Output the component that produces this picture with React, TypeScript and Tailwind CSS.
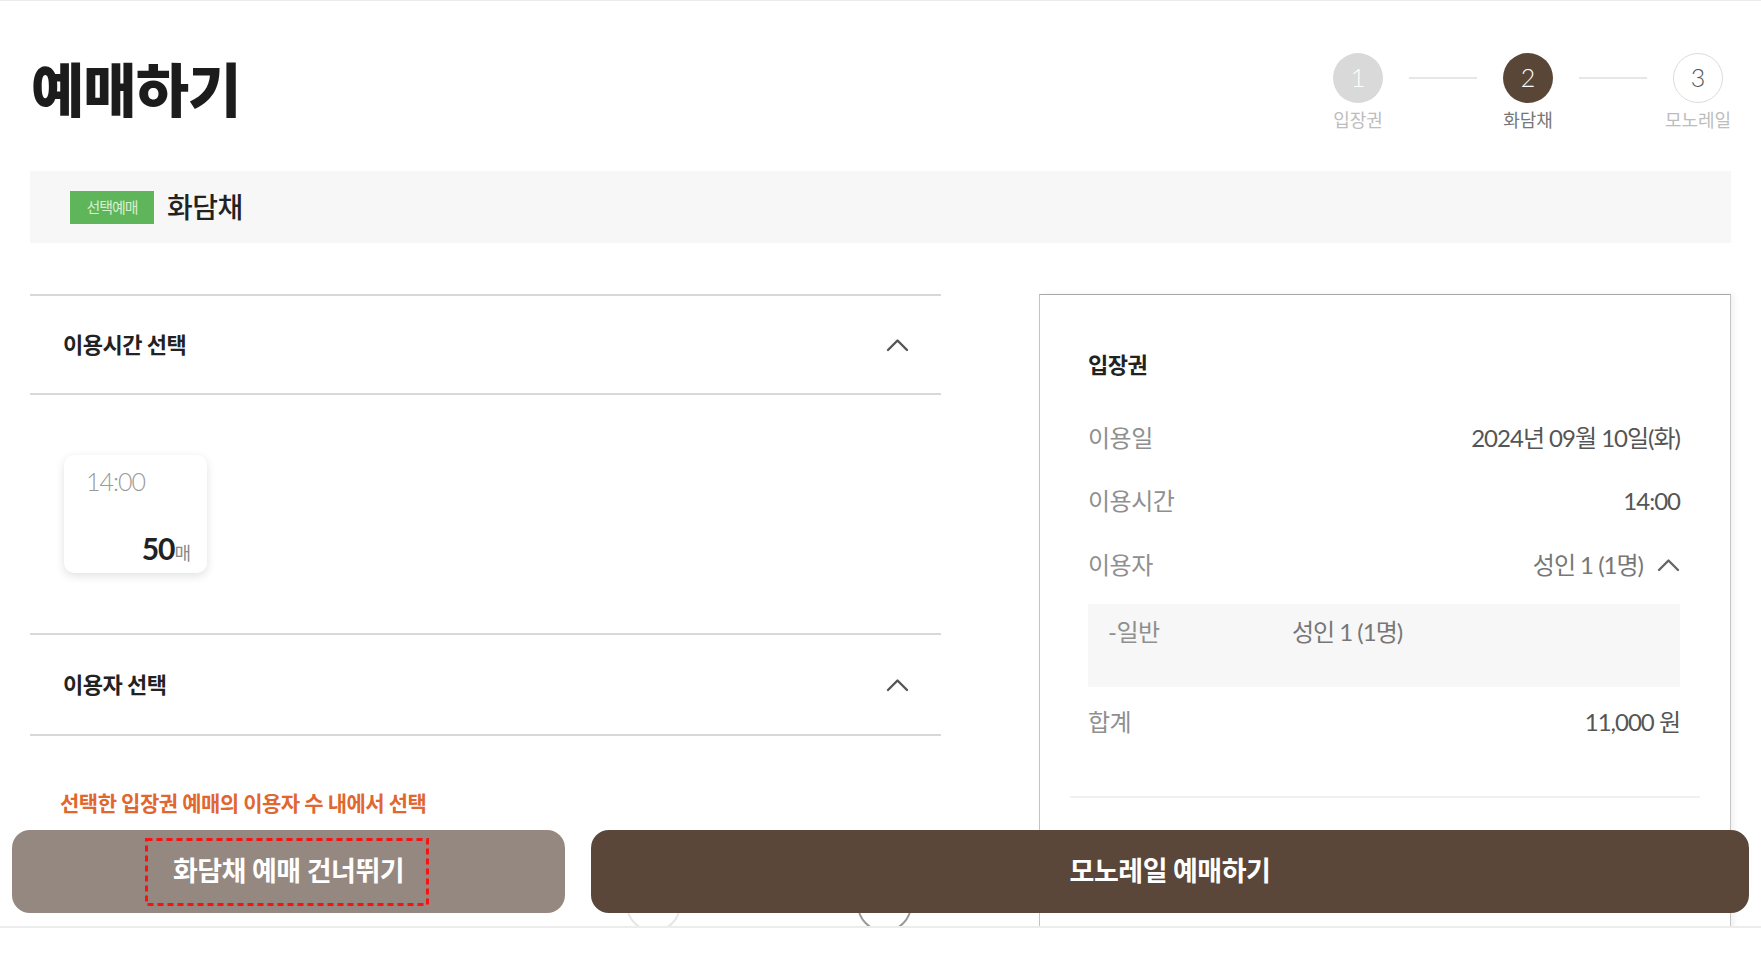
import React from 'react';

const font = { fontFamily: '"Lato", "Noto Sans CJK KR", sans-serif' };

function ChevronUp({ color = '#555' }: { color?: string }) {
  return (
    <svg width="23" height="14" viewBox="0 0 23 14" fill="none">
      <polyline points="2,12 11.5,2.5 21,12" stroke={color} strokeWidth="2.4" strokeLinecap="round" strokeLinejoin="round" />
    </svg>
  );
}

function Step({ n, label, state }: { n: number; label: string; state: 'done' | 'active' | 'todo' }) {
  const circle =
    state === 'done'
      ? 'bg-[#d9d9d9] text-white'
      : state === 'active'
        ? 'bg-[#5a4637] text-white'
        : 'bg-white text-[#555] border border-[#dcdcdc]';
  const text = state === 'active' ? 'text-[#777]' : 'text-[#bdbdbd]';
  return (
    <div className="flex w-[50px] flex-col items-center">
      <div className={`flex h-[50px] w-[50px] items-center justify-center rounded-full text-[25px] font-light ${circle}`}>{n}</div>
      <div className={`mt-[6px] whitespace-nowrap text-[18px] leading-[22px] ${text}`}>{label}</div>
    </div>
  );
}

function SectionHeader({ title, h }: { title: string; h: string }) {
  return (
    <div className={`flex items-center justify-between border-t-2 border-b-2 border-[#d8d8d8] pl-[33px] pr-[32px] ${h}`}>
      <span className="text-[22px] font-bold tracking-[-0.5px] text-[#222]">{title}</span>
      <ChevronUp />
    </div>
  );
}

function Row({ label, children, className = '' }: { label: string; children: React.ReactNode; className?: string }) {
  return (
    <div className={`flex h-[32px] items-center justify-between text-[24px] ${className}`}>
      <span className="text-[#8f8f8f] tracking-[-0.5px]">{label}</span>
      <span className="flex items-center text-[#555] tracking-[-1px]">{children}</span>
    </div>
  );
}

export default function App() {
  return (
    <div className="relative h-[963px] w-[1761px] overflow-hidden bg-white" style={font}>
      <div className="relative h-[928px] overflow-hidden border-t border-b-2 border-[#ececec]">
        {/* header */}
        <div className="flex h-[170px] items-start justify-between pl-[31px] pr-[38px] pt-[52px]">
          <h1 className="mt-[8px] text-[58px] font-black leading-none tracking-[-1px] text-[#1c1c1c]">예매하기</h1>
          <div className="flex items-start">
            <Step n={1} label="입장권" state="done" />
            <div className="mx-[26px] mt-[24px] h-[2px] w-[68px] bg-[#e6e6e6]" />
            <Step n={2} label="화담채" state="active" />
            <div className="mx-[26px] mt-[24px] h-[2px] w-[68px] bg-[#e6e6e6]" />
            <Step n={3} label="모노레일" state="todo" />
          </div>
        </div>

        {/* selected bar */}
        <div className="mx-[30px] flex h-[72px] items-center bg-[#f7f7f7] px-[40px]">
          <span className="flex h-[33px] w-[84px] items-center justify-center bg-[#5fb65a] text-[15px] text-[#d6efcf] tracking-[-1px]">선택예매</span>
          <span className="ml-[13px] text-[28px] font-medium tracking-[-0.5px] text-[#222]">화담채</span>
        </div>

        {/* columns */}
        <div className="mx-[30px] mt-[51px] flex justify-between">
          <div className="w-[911px]">
            <SectionHeader title="이용시간 선택" h="h-[101px]" />
            <div className="pl-[34px] pt-[60px] pb-[60px]">
              <div className="flex h-[118px] w-[143px] flex-col justify-between rounded-[10px] bg-white pl-[22px] pr-[16px] pt-[8px] pb-[10px] shadow-[0_3px_10px_rgba(0,0,0,0.12)]">
                <span className="text-[25px] font-light text-[#9a9a9a] tracking-[-1px]">14:00</span>
                <span className="self-end leading-none">
                  <span className="text-[30px] font-bold text-[#222] tracking-[-1px]">50</span>
                  <span className="text-[18px] text-[#888]">매</span>
                </span>
              </div>
            </div>
            <SectionHeader title="이용자 선택" h="h-[103px] border-t-0" />
            <p className="mt-[53px] pl-[30px] text-[21px] font-bold leading-[28px] text-[#e0672f] tracking-[-0.5px]">
              선택한 입장권 예매의 이용자 수 내에서 선택
            </p>
          </div>

          <div className="h-[700px] w-[692px] border border-[#c4c4c4] border-t-[#a8a8a8] px-[48px] pt-[55px] shadow-[3px_0_6px_rgba(0,0,0,0.06)]">
            <div className="pr-[2px]">
              <div className="h-[30px] text-[22px] font-bold leading-[30px] tracking-[-0.5px] text-[#222]">입장권</div>
              <Row label="이용일" className="mt-[42px]">2024년 09월 10일(화)</Row>
              <Row label="이용시간" className="mt-[31px]">14:00</Row>
              <Row label="이용자" className="mt-[32px]">
                <span className="text-[#777]">성인 1 (1명)</span>
                <span className="ml-[14px]">
                  <ChevronUp color="#666" />
                </span>
              </Row>
              <div className="mt-[23px] flex h-[83px] items-start bg-[#f7f7f7] pl-[20px] pt-[12px] text-[24px] leading-[32px]">
                <span className="w-[184px] text-[#8f8f8f] tracking-[-0.5px]">-일반</span>
                <span className="text-[#777] tracking-[-1px]">성인 1 (1명)</span>
              </div>
              <Row label="합계" className="mt-[19px]">11,000 원</Row>
            </div>
            <div className="-mx-[18px] mt-[58px] h-[2px] bg-[#f0f0f0]" />
          </div>
        </div>

        {/* things peeking out under the buttons */}
        <div className="absolute left-[626px] top-[876px] h-[55px] w-[55px] rounded-full border-2 border-[#e6e6e6]" />
        <div className="absolute left-[857px] top-[876px] h-[55px] w-[55px] rounded-full border-2 border-[#9a9a9a]" />
      </div>

      {/* bottom action buttons */}
      <div className="absolute left-[12px] right-[12px] top-[830px] flex gap-[26px]">
        <button className="relative flex h-[83px] w-[553px] items-center justify-center rounded-[18px] bg-[#958880] text-[27px] font-bold tracking-[-0.5px] text-white">
          화담채 예매 건너뛰기
          <svg className="absolute left-[133px] top-[8px]" width="284" height="68" viewBox="0 0 284 68" fill="none">
            <rect x="1.5" y="1.5" width="281" height="65" stroke="#ff1010" strokeWidth="3" strokeDasharray="6 4" />
          </svg>
        </button>
        <button className="flex h-[83px] flex-1 items-center justify-center rounded-[18px] bg-[#5a4739] text-[27px] font-bold tracking-[-0.5px] text-white">
          모노레일 예매하기
        </button>
      </div>
    </div>
  );
}
